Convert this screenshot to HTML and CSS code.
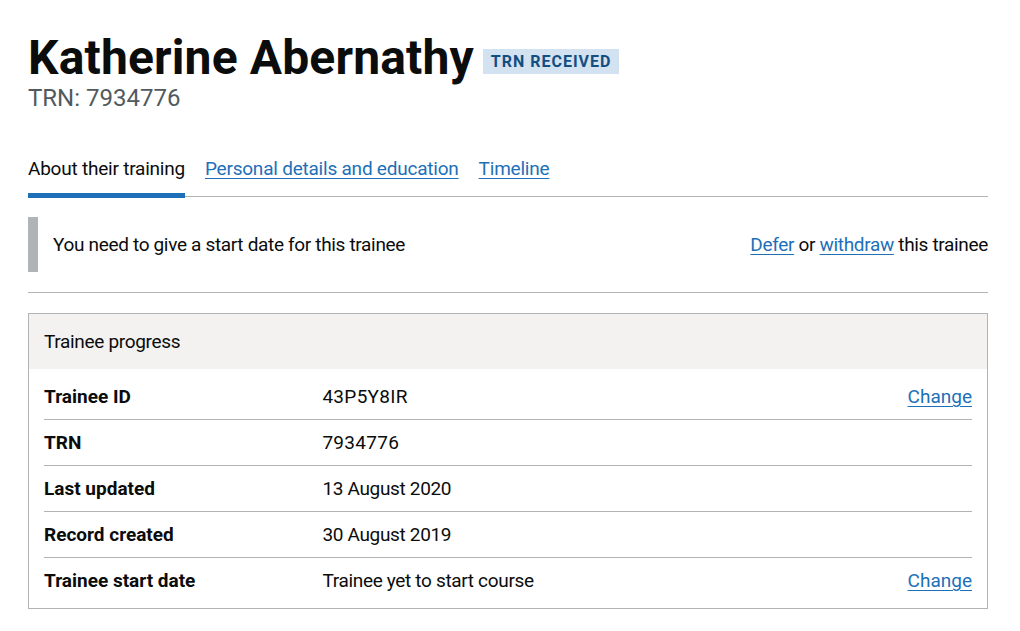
FILE: index.html
```html
<!DOCTYPE html>
<html lang="en">
<head>
<meta charset="utf-8">
<title>Katherine Abernathy</title>
<link rel="stylesheet" href="styles.css">
</head>
<body>
<main class="page">
  <header class="record-header">
    <h1 class="heading">Katherine Abernathy<strong class="tag">TRN received</strong></h1>
    <p class="caption">TRN: 7934776</p>
  </header>

  <nav class="subnav">
    <ul class="subnav-list">
      <li class="subnav-item subnav-item--current"><a class="subnav-link subnav-link--current" href="#">About their training</a></li>
      <li class="subnav-item"><a class="subnav-link" href="#">Personal details and education</a></li>
      <li class="subnav-item"><a class="subnav-link" href="#">Timeline</a></li>
    </ul>
  </nav>

  <div class="notice">
    <div class="inset">You need to give a start date for this trainee</div>
    <p class="notice-actions"><a class="link" href="#">Defer</a> or <a class="link" href="#">withdraw</a> this trainee</p>
  </div>

  <hr class="rule">

  <section class="card">
    <h2 class="card-title">Trainee progress</h2>
    <dl class="summary">
      <div class="summary-row">
        <dt class="summary-key">Trainee ID</dt>
        <dd class="summary-value summary-value--code">43P5Y8IR</dd>
        <dd class="summary-action"><a class="link" href="#">Change</a></dd>
      </div>
      <div class="summary-row">
        <dt class="summary-key">TRN</dt>
        <dd class="summary-value summary-value--code">7934776</dd>
        <dd class="summary-action"></dd>
      </div>
      <div class="summary-row">
        <dt class="summary-key">Last updated</dt>
        <dd class="summary-value">13 August 2020</dd>
        <dd class="summary-action"></dd>
      </div>
      <div class="summary-row">
        <dt class="summary-key">Record created</dt>
        <dd class="summary-value">30 August 2019</dd>
        <dd class="summary-action"></dd>
      </div>
      <div class="summary-row">
        <dt class="summary-key">Trainee start date</dt>
        <dd class="summary-value">Trainee yet to start course</dd>
        <dd class="summary-action"><a class="link" href="#">Change</a></dd>
      </div>
    </dl>
  </section>
</main>
</body>
</html>
```

FILE: styles.css
```css
* { box-sizing: border-box; }

html, body {
  margin: 0;
  padding: 0;
  background: #ffffff;
}

body {
  font-family: Roboto, "Liberation Sans", Arial, sans-serif;
  color: #0b0c0c;
  font-size: 19px;
  line-height: 25px;
  letter-spacing: -0.33px;
}

.page {
  width: 960px;
  margin-left: 28px;
  padding-top: 33px;
}

.heading {
  margin: 0;
  font-size: 48px;
  line-height: 50px;
  font-weight: 700;
  letter-spacing: 0.15px;
}

.tag {
  display: inline-block;
  vertical-align: middle;
  margin-left: 9px;
  padding: 5px 8px 4px;
  background: #d2e2f1;
  color: #144e81;
  font-size: 16px;
  line-height: 16px;
  font-weight: 700;
  text-transform: uppercase;
  letter-spacing: 1px;
}

.caption {
  margin: 0;
  font-size: 24px;
  line-height: 30px;
  color: #505a5f;
  letter-spacing: 0;
}

.subnav {
  margin-top: 43px;
}

.subnav-list {
  list-style: none;
  margin: 0;
  padding: 0;
  display: flex;
  gap: 20px;
  border-bottom: 1px solid #b1b4b6;
  letter-spacing: -0.22px;
}

.subnav-item {
  padding-bottom: 12px;
  border-bottom: 5px solid transparent;
  margin-bottom: -2px;
}

.subnav-item--current {
  border-bottom-color: #1d70b8;
}

.subnav-link {
  color: #1d70b8;
  text-decoration: underline;
  text-decoration-thickness: 1px;
  text-underline-offset: 3px;
}

.subnav-link--current {
  color: #0b0c0c;
  text-decoration: none;
}

.notice {
  display: flex;
  justify-content: space-between;
  align-items: center;
  margin-top: 20px;
}

.inset {
  border-left: 10px solid #b1b4b6;
  padding: 15px 15px;
}

.notice-actions {
  margin: 0;
}

.link {
  color: #1d70b8;
  text-decoration: underline;
  text-decoration-thickness: 1px;
  text-underline-offset: 3px;
}

.rule {
  border: 0;
  border-top: 1px solid #b1b4b6;
  margin: 20px 0 0;
  height: 0;
}

.card {
  margin-top: 20px;
  border: 1px solid #b1b4b6;
}

.card-title {
  margin: 0;
  padding: 15px 15px;
  background: #f3f2f1;
  font-size: 19px;
  line-height: 25px;
  font-weight: 400;
}

.summary {
  margin: 0;
  padding: 5px 15px;
}

.summary-row {
  display: flex;
  border-bottom: 1px solid #b1b4b6;
}

.summary-row:last-child {
  border-bottom: 0;
}

.summary-key,
.summary-value,
.summary-action {
  margin: 0;
  padding: 10px 20px 10px 0;
}

.summary-key {
  width: 30%;
  font-weight: 700;
  letter-spacing: 0;
}

.summary-value {
  width: 50%;
}

.summary-value--code {
  letter-spacing: 0.3px;
}

.summary-action {
  width: 20%;
  padding-right: 0;
  text-align: right;
  letter-spacing: 0;
}
```
